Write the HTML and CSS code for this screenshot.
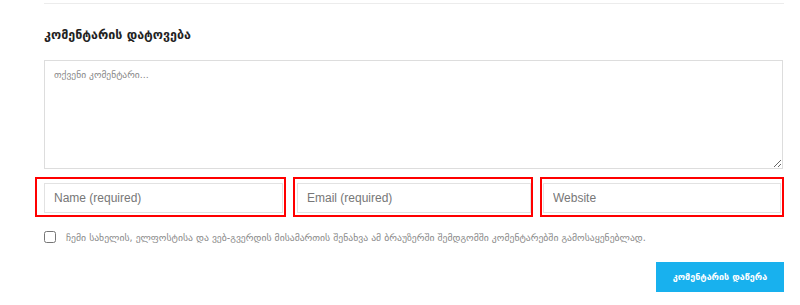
FILE: index.html
```html
<!DOCTYPE html>
<html lang="ka">

<head>
    <meta charset="UTF-8">
    <meta name="viewport" content="width=device-width, initial-scale=1.0">
    <title>კომენტარის დატოვება</title>
    <link rel="stylesheet" href="styles.css">
</head>

<body>
    <div id="respond" class="comment-respond">
        <hr class="divider">

        <h3 class="reply-title">კომენტარის დატოვება</h3>

        <form class="comment-form" onsubmit="return false;">
            <textarea class="comment-text" placeholder="თქვენი კომენტარი..."></textarea>

            <div class="field-row">
                <div class="field field-name">
                    <input type="text" placeholder="Name (required)">
                </div>
                <div class="field field-email">
                    <input type="email" placeholder="Email (required)">
                </div>
                <div class="field field-url">
                    <input type="url" placeholder="Website">
                </div>
            </div>

            <label class="consent">
                <input type="checkbox">
                <span>ჩემი სახელის, ელფოსტისა და ვებ-გვერდის მისამართის შენახვა ამ ბრაუზერში შემდგომში კომენტარებში გამოსაყენებლად.</span>
            </label>

            <div class="form-submit">
                <button type="submit" id="submit">კომენტარის დაწერა</button>
            </div>
        </form>
    </div>
</body>

</html>
```

FILE: styles.css
```css
body {
    margin: 0;
    padding: 0;
    font-family: "Liberation Sans", "DejaVu Sans", sans-serif;
    background-color: #ffffff;
    color: #333333;
}

.comment-respond {
    width: 740px;
    margin-left: 44px;
}

.divider {
    border: 0;
    height: 1px;
    background-color: #ececec;
    margin: 3px 0 0 0;
}

.reply-title {
    margin: 21px 0 0 0;
    font-family: "DejaVu Sans", sans-serif;
    font-size: 12.5px;
    font-weight: bold;
    color: #222;
    line-height: 20px;
}

.comment-form {
    display: flex;
    flex-direction: column;
}

.comment-text {
    margin-top: 15px;
    width: 739px;
    height: 109px;
    box-sizing: border-box;
    border: 1px solid #dddddd;
    padding: 8px 9px;
    font-family: "DejaVu Sans", sans-serif;
    font-size: 9.5px;
    color: #555;
    resize: vertical;
    outline: none;
}

.comment-text::placeholder {
    color: #888;
}

/* the three inputs, each inside a red marker box */
.field-row {
    display: flex;
    gap: 7px;
    margin: 8px 0 0 -9px;
}

.field {
    border: 2px solid #ff0000;
    padding: 4px 0 2px 0;
    box-sizing: border-box;
    height: 40px;
}

.field-name { width: 252px; padding-left: 7px; }
.field-email { width: 241px; padding-left: 2px; }
.field-url { width: 245px; padding-left: 1px; }

.field input {
    display: block;
    height: 30px;
    box-sizing: border-box;
    border: 1px solid #e2e2e2;
    padding: 0 9px;
    font-family: "Liberation Sans", sans-serif;
    font-size: 12px;
    color: #555;
    outline: none;
}

.field-name input { width: 239px; }
.field-email input { width: 234px; }
.field-url input { width: 238px; }

.field input::placeholder {
    color: #777;
}

.consent {
    display: flex;
    align-items: center;
    margin-top: 14px;
    font-family: "DejaVu Sans", sans-serif;
    font-size: 9.7px;
    color: #8a8a8a;
}

.consent input {
    margin: 0 10px 0 0;
    width: 12px;
    height: 12px;
}

.form-submit {
    display: flex;
    justify-content: flex-end;
    margin-top: 19px;
    padding-right: 0;
}

#submit {
    width: 128px;
    height: 30px;
    border: none;
    background-color: #18b1ee;
    color: #fff;
    font-family: "DejaVu Sans", sans-serif;
    font-size: 9px;
    font-weight: bold;
    cursor: pointer;
}

#submit:hover {
    background-color: #0c9fd9;
}
```
